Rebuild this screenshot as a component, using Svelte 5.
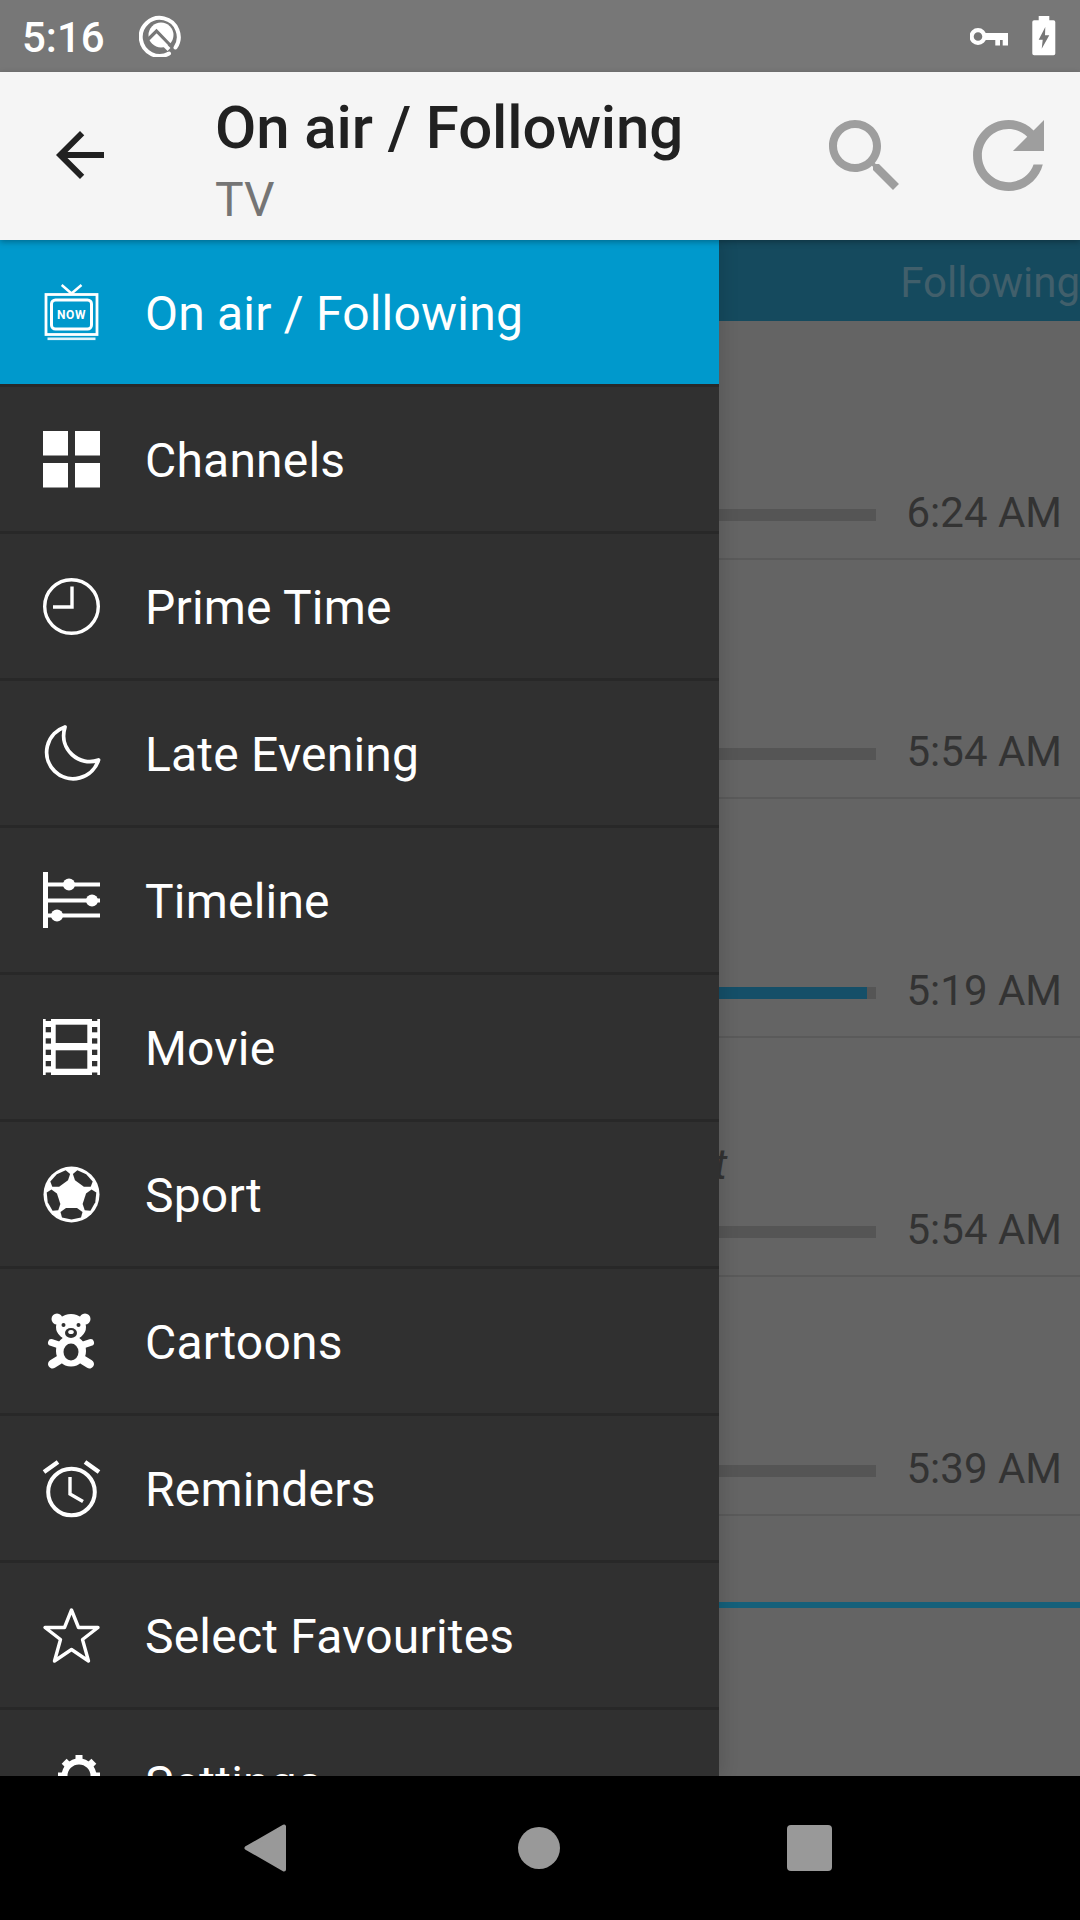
<script>
	const menu = [
		{ label: 'On air / Following', icon: 'tv', active: true },
		{ label: 'Channels', icon: 'grid' },
		{ label: 'Prime Time', icon: 'clock' },
		{ label: 'Late Evening', icon: 'moon' },
		{ label: 'Timeline', icon: 'timeline' },
		{ label: 'Movie', icon: 'film' },
		{ label: 'Sport', icon: 'ball' },
		{ label: 'Cartoons', icon: 'bear' },
		{ label: 'Reminders', icon: 'alarm' },
		{ label: 'Select Favourites', icon: 'star' },
		{ label: 'Settings', icon: 'gear' }
	];

	// the list behind the drawer, only the right edge of it shows
	const shows = [
		{ time: '6:24 AM', progress: 0 },
		{ time: '5:54 AM', progress: 0 },
		{ time: '5:19 AM', progress: 99 },
		{ time: '5:54 AM', progress: 0, note: 't' },
		{ time: '5:39 AM', progress: 0 }
	];

	const holes = [8, 19.3, 30.7, 42];
	const fifths = [0, 72, 144, 216, 288];
	const teeth = [0, 45, 90, 135, 180, 225, 270, 315];
</script>

<div class="phone">
	<div class="status">
		<span class="clock">5:16</span>
		<svg class="q" viewBox="0 0 44 44" width="44" height="44">
			<path d="M30 40.500A19 19 0 1 1 36.500 34.500" fill="none" stroke="#fff" stroke-width="4" stroke-linecap="round" />
			<circle cx="22" cy="22" r="12.500" fill="#fff" />
			<path d="M9.500 26L17.500 18L32 33" fill="none" stroke="#777" stroke-width="3.200" />
			<path d="M21 27.500L30 36.500" stroke="#fff" stroke-width="4" />
		</svg>
		<svg class="key" viewBox="0 0 38 18" width="38" height="18">
			<circle cx="8" cy="8.500" r="6.400" fill="none" stroke="#fff" stroke-width="4.200" />
			<path d="M14 5H38V17.500H32.700V12H30V17.500H25.300V12H14z" fill="#fff" />
		</svg>
		<svg class="battery" viewBox="0 0 24 40" width="24" height="40">
			<path d="M6.700 0H17.300V4.300H21.500Q23.300 4.300 23.300 6.100V37.500Q23.300 39.300 21.500 39.300H2.100Q.3 39.300 .3 37.500V6.100Q.3 4.300 2.100 4.300H6.700z" fill="#fff" />
			<path d="M13.300 11L6.700 23.700H10.700L9.700 32.700L17.300 19.300H13z" fill="#777" />
		</svg>
	</div>

	<header class="appbar">
		<svg class="back" viewBox="0 0 24 24" width="72" height="72">
			<path d="M20 11H7.830l5.590-5.590L12 4l-8 8 8 8 1.410-1.410L7.830 13H20v-2z" fill="#212121" />
		</svg>
		<div class="titles">
			<div class="title">On air / Following</div>
			<div class="subtitle">TV</div>
		</div>
		<svg class="search" viewBox="3 3 17.500 17.500" width="70" height="70">
			<path d="M15.500 14h-.79l-.28-.27C15.410 12.590 16 11.110 16 9.500 16 5.910 13.090 3 9.500 3S3 5.910 3 9.500 5.910 16 9.500 16c1.610 0 3.090-.59 4.230-1.570l.27.28v.79l5 4.990L20.490 19l-4.990-5zm-6 0C7.010 14 5 11.990 5 9.500S7.010 5 9.500 5 14 7.010 14 9.500 11.990 14 9.500 14z" fill="#9e9e9e" />
		</svg>
		<svg class="refresh" viewBox="4 4 16 16" width="71" height="71">
			<path d="M17.650 6.350C16.200 4.900 14.210 4 12 4c-4.420 0-7.990 3.580-7.990 8s3.570 8 7.990 8c3.730 0 6.840-2.550 7.730-6h-2.080c-.82 2.330-3.040 4-5.650 4-3.310 0-6-2.690-6-6s2.690-6 6-6c1.660 0 3.140.69 4.220 1.780L13 11h7V4l-2.350 2.350z" fill="#9e9e9e" />
		</svg>
	</header>

	<main class="content">
		<div class="tabs"><span>Following</span></div>
		{#each shows as show}
			<div class="show">
				<div class="info">
					{#if show.note}<div class="note">{show.note}</div>{/if}
					<div class="bar"><div class="fill" style="width: {show.progress}%"></div></div>
				</div>
				<div class="time">{show.time}</div>
			</div>
		{/each}
		<div class="live"></div>

		<nav class="drawer">
			{#each menu as item}
				<div class="item" class:active={item.active}>
					<svg class="icon" viewBox="0 0 57 57" width="57" height="57">
						{#if item.icon === 'tv'}
							<g fill="none" stroke="#fff">
								<path d="M18.700 1L28.500 9.500L38.500 1" stroke-width="2.500" />
								<rect x="3" y="10.500" width="51" height="40" stroke-width="2.800" />
								<rect x="8.500" y="16" width="40" height="29" rx="4" stroke-width="3" />
							</g>
							<rect x="4.500" y="53.500" width="48" height="2.600" fill="#dff3fa" />
							<text x="28.500" y="34.500" class="now">NOW</text>
						{:else if item.icon === 'grid'}
							<rect x="0" y="0" width="25" height="24.500" fill="#fff" />
							<rect x="32" y="0" width="25" height="24.500" fill="#fff" />
							<rect x="0" y="32" width="25" height="24.500" fill="#fff" />
							<rect x="32" y="32" width="25" height="24.500" fill="#fff" />
						{:else if item.icon === 'clock'}
							<circle cx="28.500" cy="28.500" r="26.800" fill="none" stroke="#fff" stroke-width="3.400" />
							<path d="M29 8.500V29H10" fill="none" stroke="#fff" stroke-width="3.400" />
						{:else if item.icon === 'moon'}
							<path d="M22 2A26.500 26.500 0 1 0 55.500 35C37 42 15 25 22 2z" fill="none" stroke="#fff" stroke-width="3.800" stroke-linejoin="round" />
						{:else if item.icon === 'timeline'}
							<g fill="#fff">
								<rect x="0" y="0" width="5" height="56" />
								<rect x="5" y="10.500" width="52" height="4" />
								<rect x="5" y="26.500" width="52" height="4" />
								<rect x="5" y="41.500" width="52" height="4" />
								<circle cx="26" cy="12.500" r="6" />
								<circle cx="49" cy="28.500" r="6" />
								<circle cx="14" cy="43.500" r="6" />
							</g>
						{:else if item.icon === 'film'}
							<rect x="0" y="0" width="57" height="56" fill="#fff" />
							<g fill="#303030">
								<rect x="12.700" y="5.700" width="31.600" height="18.300" />
								<rect x="12.700" y="31.300" width="31.600" height="18.400" />
								{#each holes as y}
									<rect x="2.700" {y} width="5.300" height="5.300" />
									<rect x="49" {y} width="5.300" height="5.300" />
								{/each}
								<rect x="2.700" y="0" width="5.300" height="2" />
								<rect x="49" y="0" width="5.300" height="2" />
								<rect x="2.700" y="53.500" width="5.300" height="2.500" />
								<rect x="49" y="53.500" width="5.300" height="2.500" />
							</g>
						{:else if item.icon === 'ball'}
							<circle cx="28.500" cy="28.500" r="28" fill="#fff" />
							{#each fifths as turn}
								<polygon points="17.500,46 23,42 34,42 39.500,46 38,51.500 28.500,53.500 19,51.500" fill="#303030" transform="rotate({turn} 28.500 28.500)" />
							{/each}
						{:else if item.icon === 'bear'}
							<g fill="#fff">
								<circle cx="14" cy="6" r="5.500" />
								<circle cx="42" cy="6" r="5.500" />
								<ellipse cx="28" cy="14" rx="15" ry="13" />
								<ellipse cx="28" cy="38" rx="15" ry="15.500" />
							</g>
							<g stroke="#fff" stroke-linecap="round" fill="none">
								<path d="M16 32L8.500 29.500" stroke-width="7" />
								<path d="M40 32L47.500 29.500" stroke-width="7" />
								<path d="M16 47L9.500 51" stroke-width="9" />
								<path d="M40 47L46.500 51" stroke-width="9" />
							</g>
							<g fill="#303030">
								<circle cx="20.500" cy="12" r="2" />
								<circle cx="35.500" cy="12" r="2" />
								<ellipse cx="28" cy="20" rx="6" ry="5" />
								<ellipse cx="28" cy="39" rx="7.500" ry="8.500" />
							</g>
							<ellipse cx="28" cy="19" rx="2.800" ry="2" fill="#fff" />
						{:else if item.icon === 'alarm'}
							<circle cx="28.500" cy="32" r="23.300" fill="none" stroke="#fff" stroke-width="4" />
							<path d="M27 17V34L40 41.500" fill="none" stroke="#fff" stroke-width="3.400" />
							<path d="M1 12L15 2M56 12L42 2" fill="none" stroke="#fff" stroke-width="4.400" />
						{:else if item.icon === 'star'}
							<polygon points="28.500,3 35.500,20.500 55,20.500 39.500,32.500 45.500,54 28.500,42.500 11.500,54 17.500,32.500 2,20.500 21.500,20.500" fill="none" stroke="#fff" stroke-width="3.400" stroke-linejoin="round" />
						{:else if item.icon === 'gear'}
							<circle cx="36" cy="22" r="14.500" fill="none" stroke="#fff" stroke-width="6" />
							{#each teeth as turn}
								<path d="M36 6V1" stroke="#fff" stroke-width="7" transform="rotate({turn} 36 22)" />
							{/each}
						{/if}
					</svg>
					<span class="label">{item.label}</span>
				</div>
			{/each}
		</nav>
	</main>

	<footer class="navbar">
		<svg viewBox="0 0 43 48" width="43" height="48">
			<path d="M40 2.500V45.500L2.500 24z" fill="#999" stroke="#999" stroke-width="4" stroke-linejoin="round" />
		</svg>
		<svg class="home" viewBox="0 0 42 42" width="42" height="42">
			<circle cx="21" cy="21" r="21" fill="#999" />
		</svg>
		<svg class="recent" viewBox="0 0 45 46" width="45" height="46">
			<rect width="45" height="46" rx="4" fill="#999" />
		</svg>
	</footer>
</div>

<style>
	:global(body) {
		background: #000;
	}

	.phone {
		display: flex;
		flex-direction: column;
		width: 1080px;
		height: 1920px;
		overflow: hidden;
		font-family: Roboto, 'Liberation Sans', sans-serif;
	}

	.status {
		display: flex;
		align-items: center;
		flex: none;
		height: 72px;
		padding: 0 24px 0 22px;
		box-sizing: border-box;
		background: #777;
		color: #fff;
	}

	.clock {
		padding-top: 3px;
		font-size: 42px;
		font-weight: 500;
	}

	.q {
		margin-left: 34px;
		margin-top: -2px;
	}

	.key {
		margin-left: auto;
		margin-top: 1px;
	}

	.battery {
		margin-left: 24px;
	}

	.appbar {
		position: relative;
		z-index: 2;
		display: flex;
		align-items: center;
		flex: none;
		height: 168px;
		padding-left: 44px;
		box-sizing: border-box;
		background: #f5f5f5;
		box-shadow: 0 2px 6px rgba(0, 0, 0, 0.3);
	}

	.back {
		margin-top: -2px;
	}

	.titles {
		flex: none;
		width: 614px;
		margin-left: 99px;
		margin-top: 7px;
	}

	.title {
		font-size: 60px;
		font-weight: 500;
		line-height: 72px;
		letter-spacing: -0.1px;
		color: #212121;
	}

	.subtitle {
		margin-top: 8px;
		font-size: 48px;
		line-height: 56px;
		color: #757575;
	}

	.search {
		margin-top: -2px;
	}

	.refresh {
		margin-left: 74px;
		margin-top: -2px;
	}

	.content {
		position: relative;
		flex: 1;
		min-height: 0;
		overflow: hidden;
		background: #646464;
	}

	.tabs {
		display: flex;
		justify-content: flex-end;
		align-items: center;
		height: 81px;
		background: #154a5e;
		font-size: 42px;
		color: #415f6b;
		white-space: nowrap;
	}

	.tabs span {
		margin-top: 4px;
	}

	.show {
		display: flex;
		align-items: flex-end;
		height: 239px;
		padding-bottom: 20px;
		box-sizing: border-box;
		border-bottom: 2px solid #5a5a5a;
	}

	.info {
		flex: none;
		width: 876px;
		margin-bottom: 17px;
	}

	.note {
		margin: 0 0 36px 714px;
		font-size: 42px;
		font-style: italic;
		line-height: 50px;
		color: #333;
	}

	.bar {
		height: 12px;
		background: #555;
	}

	.fill {
		height: 100%;
		background: #154f68;
	}

	.time {
		flex: 1;
		padding-right: 18px;
		font-size: 42px;
		line-height: 50px;
		text-align: right;
		color: #333;
	}

	.live {
		height: 6px;
		margin-top: 86px;
		background: #15607a;
	}

	.drawer {
		position: absolute;
		top: 0;
		left: 0;
		bottom: 0;
		width: 719px;
		overflow: hidden;
		background: #303030;
		box-shadow: 4px 0 16px rgba(0, 0, 0, 0.12);
	}

	.item {
		display: flex;
		align-items: center;
		flex: none;
		height: 147px;
		padding-left: 43px;
		box-sizing: border-box;
		border-bottom: 3px solid #282828;
	}

	.item.active {
		background: #09c;
		background-clip: padding-box;
	}

	.icon {
		flex: none;
		overflow: visible;
	}

	.label {
		margin-left: 45px;
		margin-top: 2px;
		font-size: 48px;
		letter-spacing: 0.2px;
		color: #fff;
	}

	.now {
		font-size: 12px;
		font-weight: 700;
		letter-spacing: 0.6px;
		text-anchor: middle;
		fill: #fff;
	}

	.navbar {
		display: flex;
		align-items: center;
		flex: none;
		height: 144px;
		padding-left: 244px;
		box-sizing: border-box;
		background: #000;
	}

	.home {
		margin-left: 231px;
	}

	.recent {
		margin-left: 227px;
	}
</style>
